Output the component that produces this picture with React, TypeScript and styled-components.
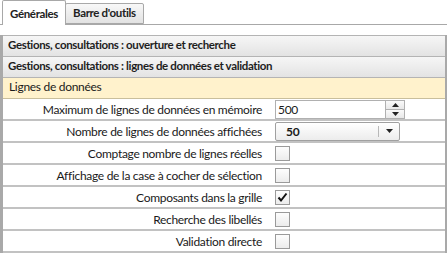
import styled, { createGlobalStyle } from "styled-components";

const Global = createGlobalStyle`
  body {
    margin: 0;
    background: #fff;
    font-family: Lato, "Open Sans", "Liberation Sans", sans-serif;
    font-size: 12px;
    letter-spacing: -0.3px;
    color: #1a1a1a;
  }
`;

const Page = styled.div`
  width: 447px;
  height: 254px;
  overflow: hidden;
  background: #fff;
`;

const TabBar = styled.div`
  display: flex;
  align-items: flex-end;
  height: 24px;
  padding-left: 2px;
  border-bottom: 1px solid #a8a8a8;
`;

const Tab = styled.div<{ $active?: boolean }>`
  display: flex;
  align-items: center;
  padding: 0 7px;
  height: ${(p) => (p.$active ? "25px" : "21px")};
  margin-bottom: ${(p) => (p.$active ? "-1px" : "0")};
  border: 1px solid #a8a8a8;
  border-bottom: ${(p) => (p.$active ? "none" : "1px solid #a8a8a8")};
  border-radius: 2px 2px 0 0;
  background: ${(p) =>
    p.$active ? "#fff" : "linear-gradient(#f8f8f8, #e2e2e2)"};
  font-weight: bold;
  font-size: 11.5px;
  letter-spacing: -0.35px;
  color: #222;
  padding-top: ${(p) => (p.$active ? "1px" : "0")};
  padding-bottom: ${(p) => (p.$active ? "0" : "2px")};
  box-sizing: border-box;
  & + & {
    margin-left: -1px;
  }
`;

const Body = styled.div`
  padding-top: 10px;
`;

const Panel = styled.div`
  border-left: 3px solid #a9a9a9;
  border-right: 2px solid #a9a9a9;
`;

const SectionHeader = styled.div`
  display: flex;
  align-items: center;
  height: 20px;
  padding: 0 0 3px 5px;
  box-sizing: border-box;
  height: 21px;
  border-top: 1px solid #b4b4b4;
  background: linear-gradient(#f6f6f6, #e3e3e3);
  font-weight: bold;
  font-size: 11.5px;
  letter-spacing: -0.35px;
  color: #1e1e1e;
`;

const GroupHeader = styled.div`
  display: flex;
  align-items: center;
  height: 22px;
  box-sizing: border-box;
  padding: 0 0 3px 6px;
  border-top: 1px solid #b4b4b4;
  border-bottom: 1px solid #c9bf9c;
  background: #fff2cc;
`;

const Row = styled.div`
  display: grid;
  grid-template-columns: 259px 1fr;
  align-items: center;
  column-gap: 13px;
  height: 20px;
  border-bottom: 2px solid #c2c2c2;
`;

const Label = styled.div`
  text-align: right;
  white-space: nowrap;
`;

const Spin = styled.div`
  display: flex;
  width: 130px;
  height: 19px;
  border: 1px solid #b0b0b0;
  box-sizing: border-box;
`;

const SpinInput = styled.div`
  flex: 1;
  display: flex;
  align-items: center;
  padding-left: 2px;
`;

const SpinButtons = styled.div`
  display: flex;
  flex-direction: column;
  width: 18px;
  border-left: 1px solid #b0b0b0;
`;

const SpinButton = styled.div`
  flex: 1;
  display: flex;
  align-items: center;
  justify-content: center;
  background: linear-gradient(#fafafa, #e8e8e8);
  & + & {
    border-top: 1px solid #b0b0b0;
  }
`;

const Select = styled.div`
  display: flex;
  width: 125px;
  height: 19px;
  border: 1px solid #a0a0a0;
  border-radius: 2px;
  box-sizing: border-box;
  background: linear-gradient(#ffffff, #ececec);
`;

const SelectValue = styled.div`
  flex: 1;
  display: flex;
  align-items: center;
  padding-left: 10px;
  font-weight: bold;
`;

const SelectArrow = styled.div`
  width: 20px;
  display: flex;
  align-items: center;
  justify-content: center;
  border-left: 1px solid #b8b8b8;
  margin: 3px 0;
`;

const Check = styled.div`
  width: 13px;
  height: 13px;
  border: 1px solid #9a9a9a;
  background: linear-gradient(#fdfdfd, #ececec);
  display: flex;
  align-items: center;
  justify-content: center;
`;

const Tri = ({ up }: { up?: boolean }) => (
  <svg width="7" height="4" viewBox="0 0 7 4">
    <path d={up ? "M0 4 L3.5 0 L7 4 Z" : "M0 0 L7 0 L3.5 4 Z"} fill="#222" />
  </svg>
);

const rows: { label: string; checked: boolean }[] = [
  { label: "Comptage nombre de lignes réelles", checked: false },
  { label: "Affichage de la case à cocher de sélection", checked: false },
  { label: "Composants dans la grille", checked: true },
  { label: "Recherche des libellés", checked: false },
  { label: "Validation directe", checked: false },
];

export default function App() {
  return (
    <Page>
      <Global />
      <TabBar>
        <Tab $active>Générales</Tab>
        <Tab>Barre d'outils</Tab>
      </TabBar>
      <Body>
        <Panel>
          <SectionHeader>Gestions, consultations : ouverture et recherche</SectionHeader>
          <SectionHeader>Gestions, consultations : lignes de données et validation</SectionHeader>
          <GroupHeader>Lignes de données</GroupHeader>
          <Row>
            <Label>Maximum de lignes de données en mémoire</Label>
            <Spin>
              <SpinInput>500</SpinInput>
              <SpinButtons>
                <SpinButton>
                  <Tri up />
                </SpinButton>
                <SpinButton>
                  <Tri />
                </SpinButton>
              </SpinButtons>
            </Spin>
          </Row>
          <Row>
            <Label>Nombre de lignes de données affichées</Label>
            <Select>
              <SelectValue>50</SelectValue>
              <SelectArrow>
                <Tri />
              </SelectArrow>
            </Select>
          </Row>
          {rows.map((r) => (
            <Row key={r.label}>
              <Label>{r.label}</Label>
              <Check>
                {r.checked && (
                  <svg width="11" height="11" viewBox="0 0 11 11">
                    <path d="M1.5 5.5 L4 8.5 L9.5 1.5" stroke="#111" strokeWidth="2" fill="none" />
                  </svg>
                )}
              </Check>
            </Row>
          ))}
        </Panel>
      </Body>
    </Page>
  );
}
